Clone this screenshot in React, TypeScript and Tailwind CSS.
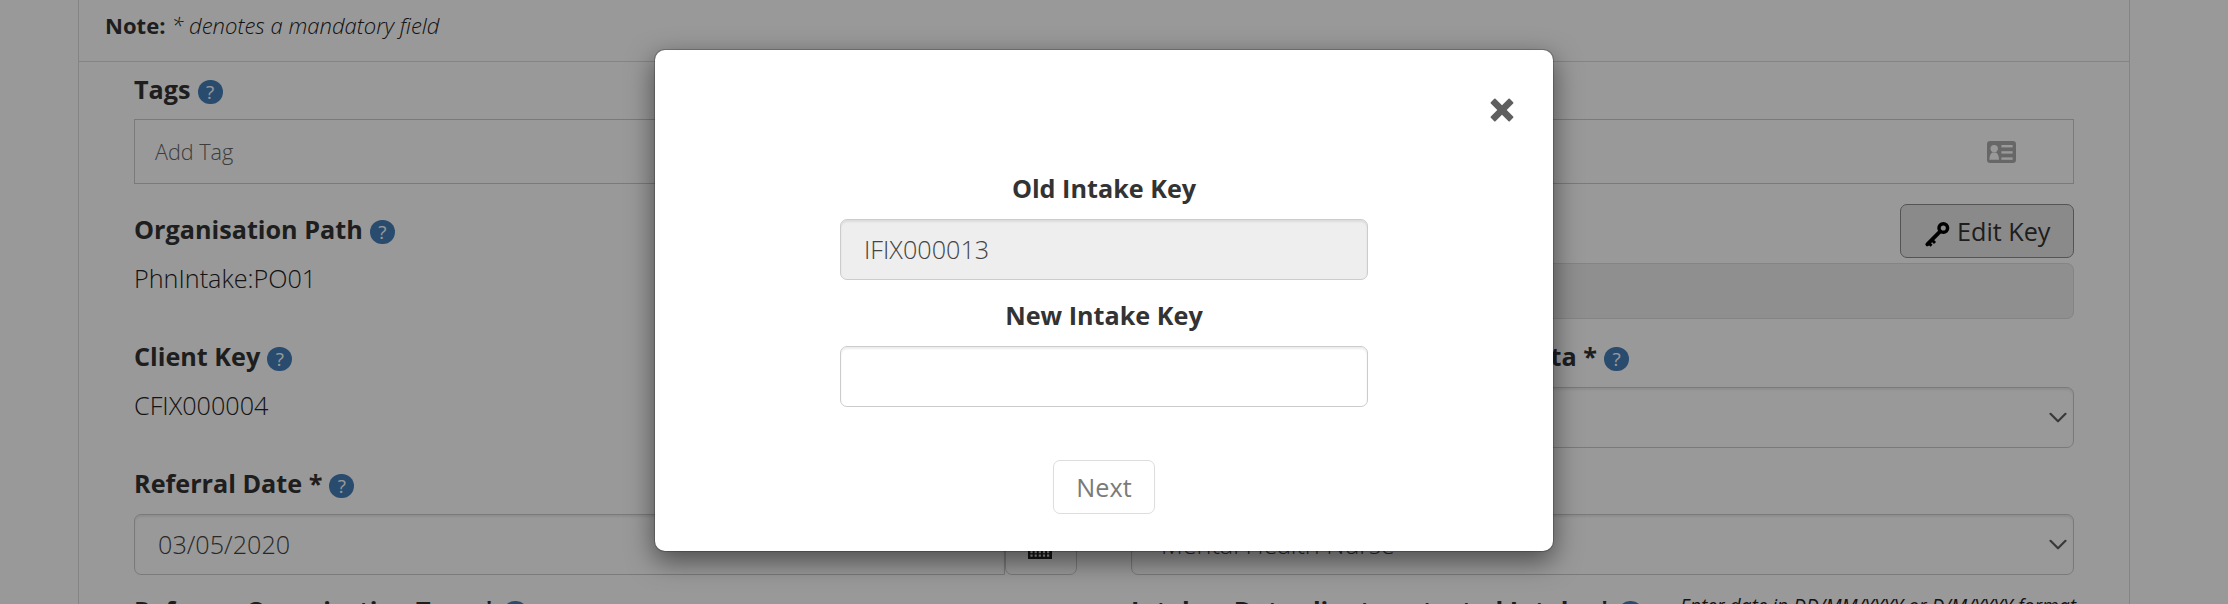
import type { ReactNode } from 'react';

const inset = 'shadow-[inset_0_2px_2px_rgba(0,0,0,0.075)]';

function Help() {
  return (
    <span className="ml-[7px] mt-[9px] flex h-6 w-[25px] shrink-0 items-center justify-center rounded-full bg-[#447db8] text-[19px] font-medium leading-none text-white">
      ?
    </span>
  );
}

function FieldLabel({ text, children }: { text: string; children?: ReactNode }) {
  return (
    <div className="flex h-[49px] items-start font-bold whitespace-nowrap">
      <label>{text}</label>
      <Help />
      {children}
    </div>
  );
}

function Chevron() {
  return (
    <svg className="h-[11px] w-[18px]" viewBox="0 0 18 11" fill="none" stroke="#606060" strokeWidth="2.2" strokeLinecap="round" strokeLinejoin="round">
      <path d="M1.5 1.8 9 9.3l7.5-7.5" />
    </svg>
  );
}

function SelectBox({ value }: { value: string }) {
  return (
    <div className={`flex h-[61px] items-center justify-between rounded-[7px] border border-[#ccc] pr-[6px] pl-[29px] font-light text-[#444] ${inset}`}>
      <span className="pb-[2px]">{value}</span>
      <Chevron />
    </div>
  );
}

function CardIcon() {
  return (
    <svg className="h-[22px] w-[29px]" viewBox="0 0 29 22">
      <rect width="29" height="22" rx="3.2" fill="#acacac" />
      <g fill="#fff">
        <circle cx="7.2" cy="7.6" r="3.7" />
        <path d="M2.4 18.8c0-4 1.3-6.4 3-7.4h3.6c1.7 1 3 3.4 3 7.4z" />
        <rect x="14.4" y="4" width="11.2" height="2.4" />
        <rect x="14.4" y="10.2" width="11.2" height="2.4" />
        <rect x="14.4" y="16.4" width="11.2" height="2.4" />
      </g>
    </svg>
  );
}

function KeyIcon() {
  return (
    <svg className="mt-[6px] h-[26px] w-[26px]" viewBox="0 0 26 26" fill="none" stroke="#000">
      <circle cx="19.3" cy="7" r="4.3" strokeWidth="3.5" />
      <path d="M16.2 10.4 3.3 23.3" strokeWidth="3.8" strokeLinecap="round" />
      <path d="m4.5 21.8 3 3M7.8 18.8l3.2 3.2" strokeWidth="3" />
    </svg>
  );
}

const dotColumns = [2.4, 6.6, 10.7, 14.9, 19];
const dotRows = [8, 12, 16, 19.5];

function CalendarIcon() {
  return (
    <svg className="h-6 w-6" viewBox="0 0 24 24">
      <path fill="#222" d="M0 3h4V0h4v3h8V0h4v3h4v21H0z" />
      {dotRows.map((y) => dotColumns.map((x) => <rect key={`${x}-${y}`} x={x} y={y} width="2.2" height="2.2" fill="#fff" />))}
    </svg>
  );
}

function ModalField({ label, value, disabled }: { label: string; value: string; disabled?: boolean }) {
  return (
    <div className="flex flex-col">
      <label className="h-[49px] text-center font-bold text-[#333]">{label}</label>
      <div className={`flex h-[61px] items-center rounded-[7px] border border-[#ccc] px-[23px] pb-[2px] font-light text-[#444] ${inset} ${disabled ? 'bg-[#eee]' : 'bg-white'}`}>
        {value}
      </div>
    </div>
  );
}

export default function App() {
  return (
    <div className="relative h-[604px] w-[2228px] overflow-hidden bg-white font-['Open_Sans','Noto_Sans',sans-serif] text-[25.2px] leading-[36px] text-[#333]">
      <main className="ml-[78px] h-[604px] w-[2052px] overflow-hidden border-x border-[#ddd]">
        <div className="flex h-[62px] border-b border-[#ddd] pt-[9px] pl-[26px] text-[22.05px] leading-[32px]">
          <b>Note:</b>
          <span className="ml-[6px] font-light text-[#222] italic">* denotes a mandatory field</span>
        </div>

        <div className="px-[55px] pt-[9px]">
          <div className="flex h-12 items-start font-bold">
            <label>Tags</label>
            <Help />
          </div>
          <div className="flex h-[65px] items-center justify-between border border-[#ccc] pr-[57px] pl-5 text-[21.6px] font-light text-[#666]">
            <span>Add Tag</span>
            <CardIcon />
          </div>

          <div className="grid grid-cols-2 gap-[54px] pt-5">
            <section className="flex flex-col pt-[7px]">
              <div className="h-[127px]">
                <FieldLabel text="Organisation Path" />
                <p className="font-light text-[#222]">PhnIntake:PO01</p>
              </div>
              <div className="h-[127px]">
                <FieldLabel text="Client Key" />
                <p className="font-light text-[#222]">CFIX000004</p>
              </div>
              <div className="h-[127px]">
                <FieldLabel text="Referral Date *" />
                <div className="flex">
                  <div className={`flex h-[61px] w-[871px] items-center rounded-l-[7px] border border-[#ccc] pb-[2px] pl-[23px] font-light text-[#444] ${inset}`}>
                    03/05/2020
                  </div>
                  <button className="flex h-[61px] w-[72px] items-center justify-center rounded-[7px] border border-[#ccc] pt-[5px] pr-[3px]">
                    <CalendarIcon />
                  </button>
                </div>
              </div>
              <FieldLabel text="Referrer Organisation Type *" />
            </section>

            <section className="flex flex-col">
              <div className="flex h-[134px] flex-col">
                <button className="flex h-[54px] w-[174px] items-center self-end rounded-[7px] border border-[#8c8c8c] bg-[#e6e6e6] pl-[23px]">
                  <KeyIcon />
                  <span className="ml-[7px]">Edit Key</span>
                </button>
                <div className="mt-[5px] h-[56px] rounded-[7px] border border-[#ddd] bg-[#eee]" />
              </div>
              <div className="h-[127px]">
                <FieldLabel text="Client Consent to Anonymised Data *" />
                <SelectBox value="" />
              </div>
              <div className="h-[127px]">
                <FieldLabel text="Organisation Type *" />
                <SelectBox value="Mental Health Nurse" />
              </div>
              <FieldLabel text="Intake - Date client contacted Intake *">
                <em className="-mt-[4px] -mr-[2px] ml-auto text-[19.2px] font-normal text-[#222]">Enter date in DD/MM/YYYY or D/M/YYYY format</em>
              </FieldLabel>
            </section>
          </div>
        </div>
      </main>

      <div className="absolute inset-0 flex items-start justify-center bg-black/40 pt-[49px] pr-[20px]">
        <div className="flex h-[503px] w-[900px] flex-col items-center rounded-[11px] border border-black/20 bg-white bg-clip-padding shadow-[0_9px_27px_rgba(0,0,0,0.5)]">
          <button aria-label="Close" className="mt-[48px] mr-[39px] h-6 w-6 self-end">
            <svg className="h-6 w-6" viewBox="-12 -12 24 24" fill="#5f5f5f">
              <rect x="-13.4" y="-3.3" width="26.8" height="6.6" rx="0.9" transform="rotate(45)" />
              <rect x="-13.4" y="-3.3" width="26.8" height="6.6" rx="0.9" transform="rotate(-45)" />
            </svg>
          </button>
          <div className="mt-12 flex w-[528px] flex-col gap-[17px]">
            <ModalField label="Old Intake Key" value="IFIX000013" disabled />
            <ModalField label="New Intake Key" value="" />
          </div>
          <button className="mt-[53px] h-[54px] w-[102px] rounded-[7px] border border-[#ddd] text-[#7a7a7a]">Next</button>
        </div>
      </div>
    </div>
  );
}
